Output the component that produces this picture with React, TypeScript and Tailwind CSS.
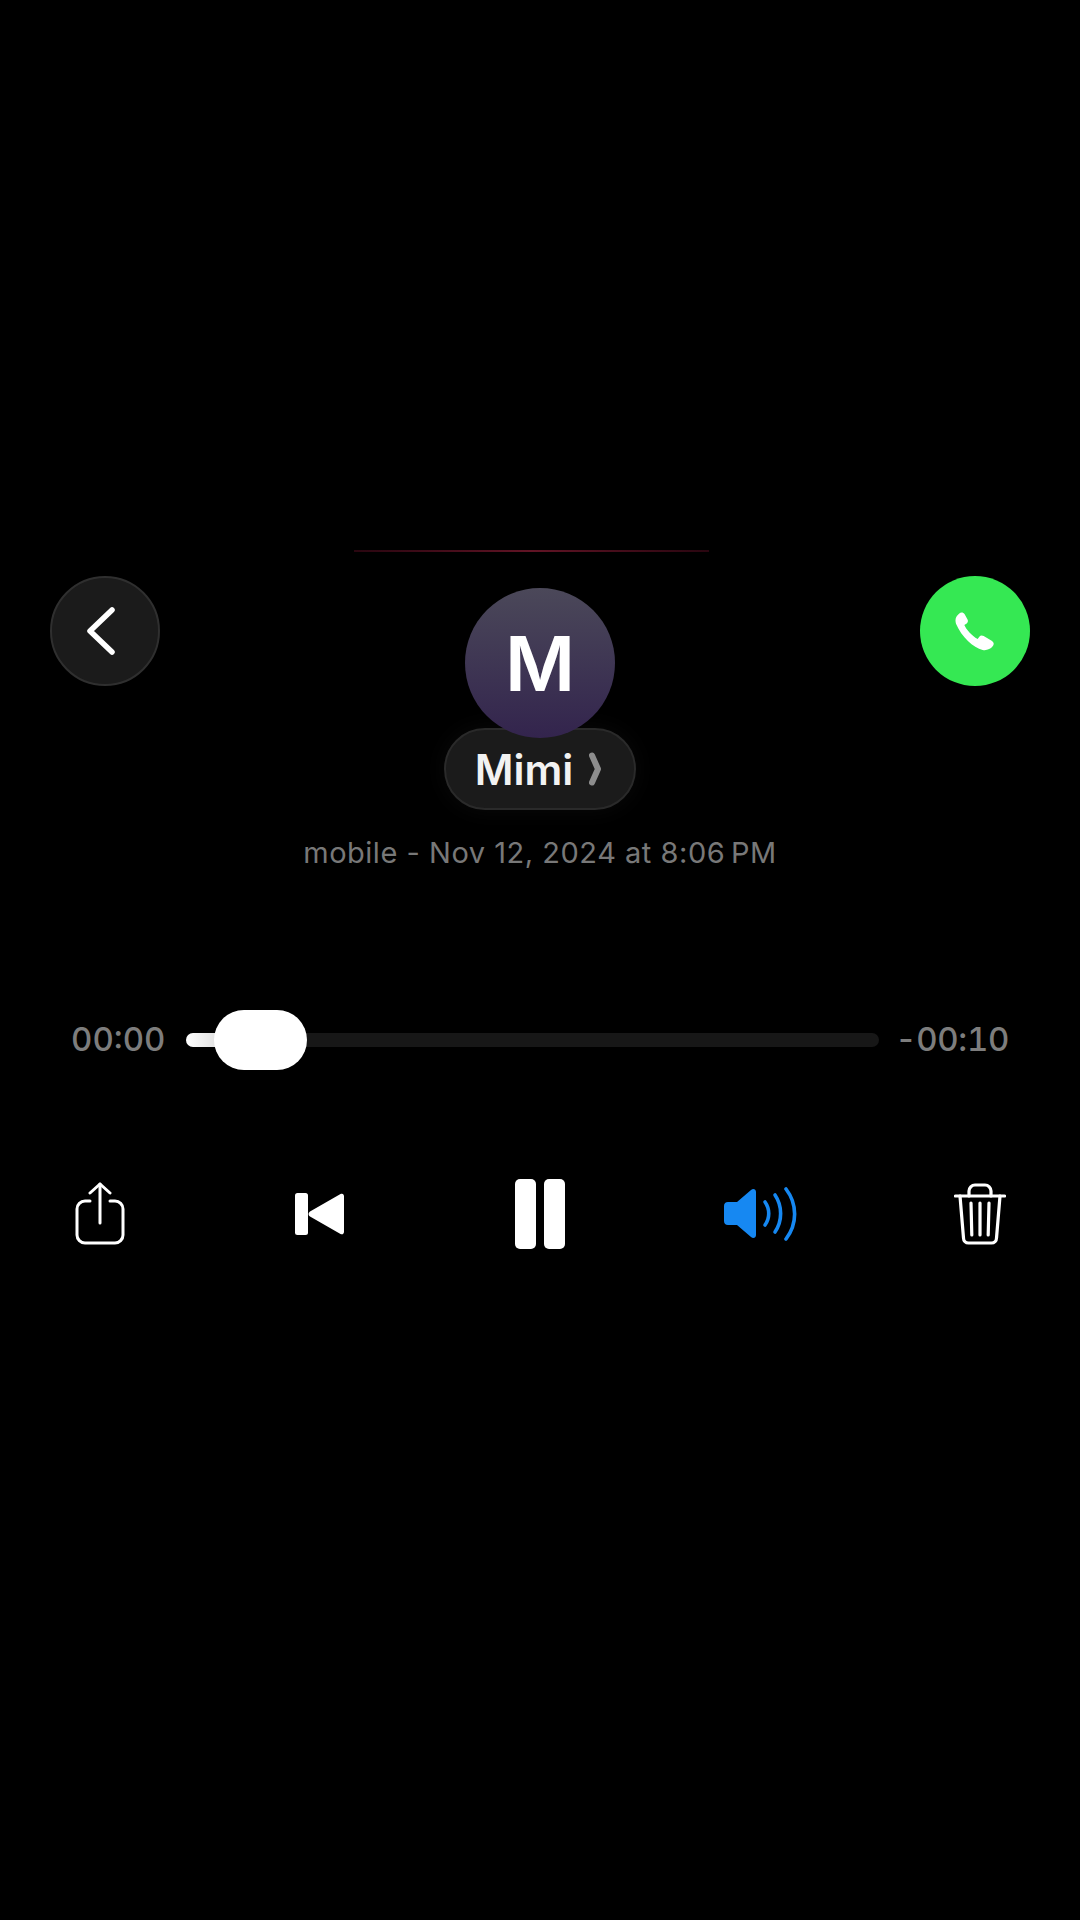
import React from 'react';

const sans = 'font-["Inter","Liberation_Sans",sans-serif]';

const ShareIcon = () => (
  <svg width="50" height="64" viewBox="0 0 50 64" fill="none" stroke="white" strokeWidth="3" strokeLinecap="round" strokeLinejoin="round">
    <path d="M15 19H10a8 8 0 0 0-8 8v26a8 8 0 0 0 8 8h30a8 8 0 0 0 8-8V27a8 8 0 0 0-8-8h-5" />
    <path d="M25 41V2" />
    <path d="M15 11 25 2l10 9" />
  </svg>
);

const SkipBackIcon = () => (
  <svg width="50" height="42" viewBox="0 0 50 42" fill="white">
    <rect x="0" y="0" width="13" height="42" rx="2.5" />
    <path d="M49 3.2v35.6c0 2.2-1.6 3.2-3.5 2.1L15 23.6c-2-1.2-2-4 0-5.2L45.5 1.1C47.4 0 49 1 49 3.2Z" />
  </svg>
);

const SpeakerIcon = () => (
  <svg width="74" height="54" viewBox="0 0 74 54" fill="none" stroke="#1688f2" strokeLinecap="round">
    <path d="M1 19c0-2.500 1.500-4 4-4h9L28 3c2-1.700 5-1 5 2v43c0 3-3 3.700-5 2L14 38H5c-2.500 0-4-1.500-4-4Z" fill="#1688f2" stroke="none" />
    <path d="M42 15c5 7 5 16 0 23" strokeWidth="3.6" />
    <path d="M52 8c7.500 11 7.500 26 0 37" strokeWidth="3.6" />
    <path d="M63 2c11.500 15 11.500 35 0 50" strokeWidth="3.6" />
  </svg>
);

const TrashIcon = () => (
  <svg width="52" height="62" viewBox="0 0 52 62" fill="none" stroke="white" strokeWidth="3.2" strokeLinecap="round" strokeLinejoin="round">
    <path d="M1.500 13h49" />
    <path d="M15 13V8a6 6 0 0 1 6-6h10a6 6 0 0 1 6 6v5" />
    <path d="M6 13l3.500 42a5 5 0 0 0 5 5h23a5 5 0 0 0 5-5L46 13" />
    <path d="M17 20l.800 32M26 20v32M35 20l-.800 32" />
  </svg>
);

export default function App() {
  return (
    <div className={`min-h-[1920px] w-[1080px] bg-black ${sans}`}>
      <div className="h-[550px]" />
      <div className="ml-[354px] h-0.5 w-[355px] bg-gradient-to-r from-[#2a0610] via-[#621425] to-[#2a0610]" />

      {/* Header with back, contact and call */}
      <div className="mt-6 flex items-start justify-between px-[50px]">
        <button className="flex h-[110px] w-[110px] items-center justify-center rounded-full border-2 border-[#2f2f2f] bg-[#1b1b1b]">
          <svg width="34" height="52" viewBox="0 0 34 52" fill="none" stroke="white" strokeWidth="5.500" strokeLinecap="round" strokeLinejoin="round" className="mr-2">
            <path d="M28 5 6 26l22 21" />
          </svg>
        </button>

        <div className="mt-3 flex flex-col items-center">
          <div className="relative z-10 flex h-[150px] w-[150px] items-center justify-center rounded-full bg-gradient-to-b from-[#4b4859] to-[#33244d] text-[76px] font-semibold text-white">
            M
          </div>
          <div className="-mt-2.5 flex h-[82px] w-[192px] items-center justify-center gap-4 rounded-full border-2 border-[#2a2a2a] bg-[#1b1b1b] pr-1 shadow-[0_0_24px_rgba(255,255,255,0.04)]">
            <span className="text-[42px] font-semibold text-[#f2f2f2]">Mimi</span>
            <svg width="12" height="34" viewBox="0 0 12 34" fill="none" stroke="#8d8d8d" strokeWidth="6" strokeLinecap="round" strokeLinejoin="round">
              <path d="M3 3.500l6 13.500-6 13.500" />
            </svg>
          </div>
        </div>

        <button className="flex h-[110px] w-[110px] items-center justify-center rounded-full bg-[#35e853]">
          <svg width="40" height="40" viewBox="60 62 120 120" fill="white">
            <path d="M72 70C78 65 85 66 89 72L98 88C100 93 98 97 94 100L88 104C94 118 110 136 128 146L133 139C136 135 141 134 146 137L170 151C177 155 178 162 173 168C166 177 155 181 143 179C115 172 80 140 63 100C59 87 63 77 72 70Z" />
          </svg>
        </button>
      </div>

      <p className="mt-[25px] text-center text-[29px] leading-9 tracking-[0.018em] text-[#787878]">
        mobile - Nov 12, 2024 at 8:06&#8201;PM
      </p>

      {/* Scrubber */}
      <div className="mt-[139px] flex h-[60px] items-center pl-[71px] pr-[71px]">
        <span className="w-[115px] shrink-0 text-[33px] font-medium tabular-nums text-[#7d7d7d]">00:00</span>
        <div className="relative h-3.5 w-[693px] shrink-0 rounded-full bg-[#171717]">
          <div className="absolute left-0 top-0 h-3.5 w-9 rounded-l-full bg-gradient-to-r from-white to-[#dcdcdc]" />
          <div className="absolute left-7 top-[-23px] h-[60px] w-[93px] rounded-full bg-white" />
        </div>
        <span className="ml-auto shrink-0 text-right text-[33px] font-medium tracking-[-0.01em] tabular-nums text-[#7d7d7d]">-00:10</span>
      </div>

      {/* Playback controls */}
      <div className="mt-[108px] flex items-center justify-between px-[50px]">
        <button className="flex h-[72px] w-[100px] items-center justify-center"><ShareIcon /></button>
        <button className="flex h-[72px] w-[100px] items-center justify-center"><SkipBackIcon /></button>
        <button className="flex h-[72px] w-[100px] items-center justify-center gap-2">
          <span className="h-[70px] w-[21px] rounded-[5px] bg-white" />
          <span className="h-[70px] w-[21px] rounded-[5px] bg-white" />
        </button>
        <button className="flex h-[72px] w-[100px] items-center justify-center"><SpeakerIcon /></button>
        <button className="flex h-[72px] w-[100px] items-center justify-center"><TrashIcon /></button>
      </div>
    </div>
  );
}
